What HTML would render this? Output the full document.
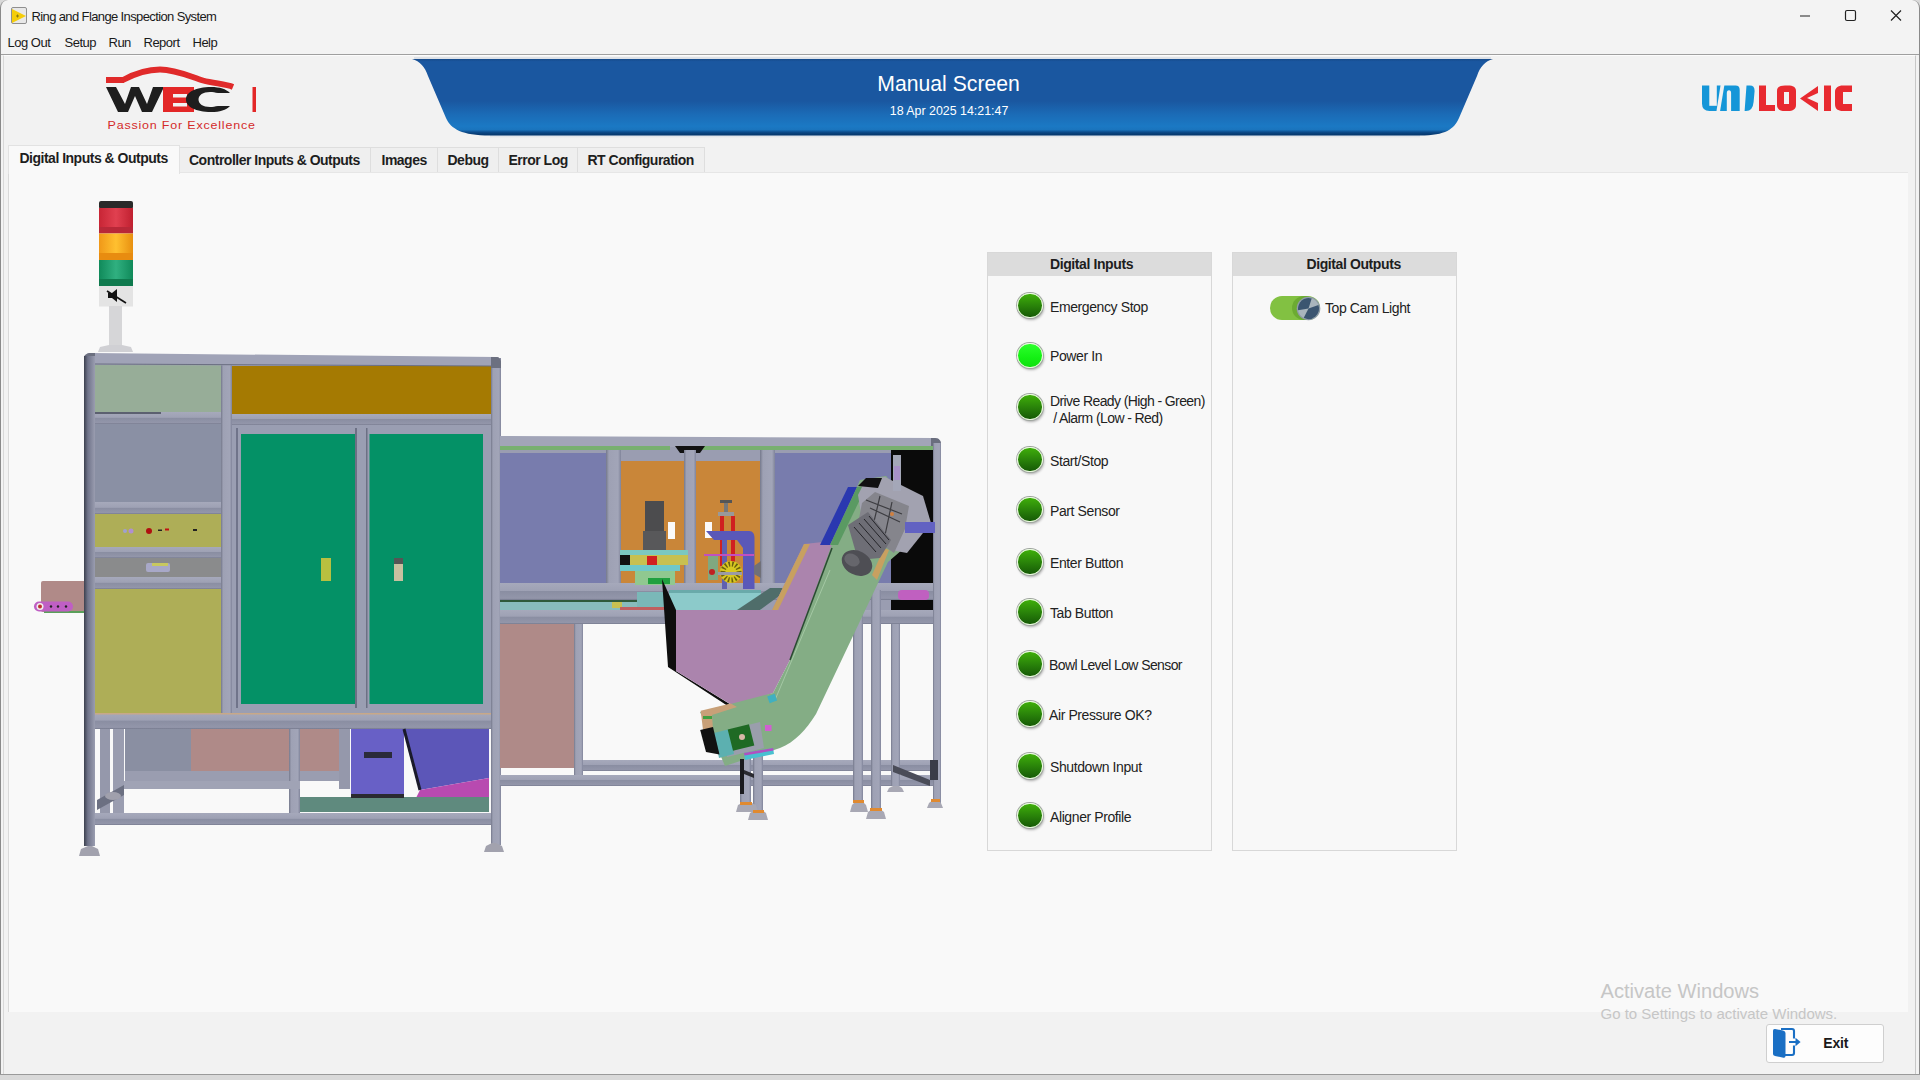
<!DOCTYPE html>
<html><head><meta charset="utf-8">
<style>
*{box-sizing:border-box;margin:0;padding:0}
html,body{width:1920px;height:1080px;overflow:hidden;background:#d9d9d9;font-family:"Liberation Sans",sans-serif;}
.abs{position:absolute}
#win{position:absolute;left:0;top:0;width:1920px;height:1075px;background:#f3f3f3;border:1px solid #8a8a8a;border-top:none;border-radius:8px 8px 0 0;overflow:hidden}
.t{position:absolute;white-space:nowrap;line-height:1}
.menu{font-size:13px;letter-spacing:-0.5px;color:#1a1a1a;top:35.8px}
#inner{position:absolute;left:2px;top:55px;width:1913px;height:1019px;background:#f2f2f2;border-left:1px solid #d8d8d8;border-top:1px solid #fcfcfc;border-right:1px solid #c8c8c8}
.tab{position:absolute;top:147px;height:26px;border:1px solid #dedede;border-bottom:none;background:#efefef}
.tt{position:absolute;white-space:nowrap;line-height:1;font-size:14px;font-weight:bold;letter-spacing:-0.5px;color:#1e1e1e;top:152.5px}
#content{position:absolute;left:8px;top:172px;width:1900px;height:840px;background:#f9f9f9;border-left:1px solid #d9d9d9;border-top:1px solid #e6e6e6}
.panel{position:absolute;top:252px;width:225px;height:599px;border:1px solid #d8d8d8;background:#f8f8f8}
.phead{position:absolute;left:0;top:0;width:100%;height:23px;background:#dcdcdc}
.ph{position:absolute;white-space:nowrap;line-height:1;font-size:14px;font-weight:bold;letter-spacing:-0.4px;color:#1e1e1e;top:256.6px}
.led{position:absolute;left:1017px;width:25.5px;height:25.5px;border-radius:50%;background:linear-gradient(#3fae0a,#2a840a 50%,#165a06);border:1.4px solid #e6fcd8;box-shadow:0 0 0 0.9px #a0a6a0,1px 2px 2.5px rgba(0,0,0,0.3)}
.led.on{background:linear-gradient(#2cff2c,#14f014 60%,#10e010)}
.lbl{position:absolute;left:1050px;font-size:14px;letter-spacing:-0.4px;color:#222;white-space:nowrap;line-height:16.5px}
</style></head><body>
<div id="win">
  <!-- title bar -->
  <div class="abs" style="left:10px;top:7px;width:16px;height:17px;border:1px solid #8f8f8f;border-radius:2px;background:#e8e8e8"></div>
  <svg class="abs" style="left:11px;top:8px" width="15" height="15"><polygon points="0,1 0,15 14,8" fill="#f5cd0a"/><path d="M4,8h3M5.5,6.5v3" stroke="#8a7a10" stroke-width="1"/></svg>
  <div class="t" style="left:30.5px;top:9.6px;font-size:13px;letter-spacing:-0.62px;color:#1a1a1a">Ring and Flange Inspection System</div>
  <svg class="abs" style="left:1794px;top:8px" width="110" height="16">
    <line x1="5" y1="8" x2="15" y2="8" stroke="#222" stroke-width="1.2"/>
    <rect x="50.5" y="2.5" width="10" height="10" rx="1.5" fill="none" stroke="#222" stroke-width="1.2"/>
    <path d="M96,2.5 L106,12.5 M106,2.5 L96,12.5" stroke="#222" stroke-width="1.2"/>
  </svg>
  <!-- menu -->
  <div class="t menu" style="left:6.5px">Log Out</div>
  <div class="t menu" style="left:63.5px">Setup</div>
  <div class="t menu" style="left:107.5px">Run</div>
  <div class="t menu" style="left:142.5px">Report</div>
  <div class="t menu" style="left:191.5px">Help</div>
  <div class="abs" style="left:0;top:54px;width:1920px;height:1px;background:#9f9f9f"></div>
  <div id="inner"></div>
</div>
<div class="abs" style="left:0;top:1074px;width:1920px;height:1px;background:#9a9a9a"></div>

<!-- WEC logo -->
<svg class="abs" style="left:100px;top:60px" width="170" height="75" viewBox="100 60 170 75">
  <path d="M106,80 L123,80 C135,73.5 146,69.5 160,69.5 C175,69.5 189,76 203,80.5 C214,83.5 226,84 233,87" fill="none" stroke="#e02a2a" stroke-width="5.8"/>
  <polygon points="106,87 116,87 125,104 131,87 139,87 147,104 153,87 164,87 152,112 142,112 135,96 128,112 118,112" fill="#1e1e1e"/>
  <rect x="163" y="87" width="31" height="25" fill="#e32727"/>
  <rect x="173" y="94" width="14" height="3.5" fill="#f2f2f2"/>
  <rect x="173" y="103" width="14" height="3.5" fill="#f2f2f2"/>
  <path d="M230,93 C226,89 220,87 211,87 C196,87 186,92 186,99.5 C186,107 196,112 211,112 C220,112 226,110 230,106 L218,106 C215,106.5 213,107 210,107 C203,107 198.5,104 198.5,99.5 C198.5,95 203,92 210,92 C213,92 215,92.5 218,93 Z" fill="#1e1e1e"/>
  <rect x="252.5" y="87" width="3.5" height="25" fill="#e32727"/>
</svg>
<div class="t" style="left:107.5px;top:118.5px;font-size:12.5px;color:#d42a2a;letter-spacing:0.8px;transform:scaleY(0.86);transform-origin:0 100%">Passion For Excellence</div>
<!-- banner -->
<svg class="abs" style="left:400px;top:55px" width="1110" height="90" viewBox="400 55 1110 90">
  <defs>
    <linearGradient id="bg1" x1="0" y1="0" x2="0" y2="1">
      <stop offset="0" stop-color="#164a8a"/>
      <stop offset="0.035" stop-color="#1a57a0"/>
      <stop offset="0.55" stop-color="#1a57a0"/>
      <stop offset="0.72" stop-color="#1b6bb6"/>
      <stop offset="0.88" stop-color="#1b79c4"/>
      <stop offset="0.925" stop-color="#1a74bd"/>
      <stop offset="0.955" stop-color="#0d4c8c"/>
      <stop offset="0.985" stop-color="#073a70"/>
      <stop offset="1" stop-color="#0c4078"/>
    </linearGradient>
    <linearGradient id="sh" x1="0" y1="0" x2="0" y2="1">
      <stop offset="0" stop-color="#8aa0c0" stop-opacity="0.6"/>
      <stop offset="1" stop-color="#f2f2f2" stop-opacity="0"/>
    </linearGradient>
  </defs>
  <rect x="490" y="134" width="930" height="5" fill="url(#sh)"/><rect x="414" y="57" width="1077" height="2.5" fill="#c8d0dc" opacity="0.5"/>
  <path d="M412,59 L1493,59 C1485,61 1480,67 1477,76 L1459,118 C1454,129 1446,135.5 1420,135.5 L490,135.5 C462,135.5 451,129 446,118 L428,76 C425,67 420,61 412,59 Z" fill="url(#bg1)"/>
</svg>
<div class="t" style="left:877.3px;top:73.3px;font-size:21.2px;color:#fff">Manual Screen</div>
<div class="t" style="left:889.8px;top:105px;font-size:12.4px;color:#fff">18 Apr 2025 14:21:47</div>
<!-- unilogic -->
<svg class="abs" style="left:1700px;top:83px" width="156" height="30" viewBox="1700 83 156 30">
  <path d="M1702,85.6 H1735.5 Q1739.7,85.6 1739.7,90 V111 H1709.5 Q1702,111 1702,103.5 Z" fill="#1596d8"/>
  <rect x="1709.3" y="85" width="7.5" height="20.8" fill="#f2f2f2"/>
  <path d="M1720.6,85 L1724.4,85 L1720,111.5 L1716.4,111.5 Z" fill="#f2f2f2"/>
  <path d="M1726.8,111.5 V93 Q1726.8,90.3 1729,90.3 Q1731.1,90.3 1731.1,93 V111.5 Z" fill="#f2f2f2"/>
  <path d="M1746.5,85.6 H1750 Q1754.6,85.6 1754.6,91 L1753.6,102 Q1752.8,111 1746,111 H1744.6 Z" fill="#1596d8"/>
  <path d="M1759,85.5 L1766,85.5 L1766,105 L1775,105 L1775,111 L1759,111 Z" fill="#e82a30"/>
  <path d="M1777,91 C1777,87 1780,85.5 1785,85.5 L1788,85.5 C1793,85.5 1796,87 1796,91 L1796,105 C1796,109 1793,111 1788,111 L1785,111 C1780,111 1777,109 1777,105 Z M1784,92 L1784,104 L1789,104 L1789,92 Z" fill="#e82a30" fill-rule="evenodd"/>
  <path d="M1818,86 L1818,93 L1807,98 L1818,103 L1818,111 L1800,98.5 Z" fill="#e82a30"/>
  <rect x="1824" y="85.5" width="7" height="25.5" fill="#e82a30"/>
  <path d="M1852,85.5 L1852,92 L1843,92 L1843,104 L1852,104 L1852,111 L1843,111 C1838,111 1835,109 1835,104 L1835,92 C1835,88 1838,85.5 1843,85.5 Z" fill="#e82a30"/>
</svg>
<!-- tabs -->
<div class="tab" style="left:178px;width:193px"></div>
<div class="tab" style="left:370px;width:68px"></div>
<div class="tab" style="left:437px;width:62px"></div>
<div class="tab" style="left:498px;width:80px"></div>
<div class="tab" style="left:577px;width:128px"></div>
<div id="content"></div>
<div class="tab" style="left:8px;top:145px;width:172px;height:29px;background:#f9f9f9;border-color:#e2e2e2"></div>
<div class="tt" style="left:19.5px;top:150.6px">Digital Inputs &amp; Outputs</div>
<div class="tt" style="left:189px">Controller Inputs &amp; Outputs</div>
<div class="tt" style="left:381.5px">Images</div>
<div class="tt" style="left:447.5px">Debug</div>
<div class="tt" style="left:508.5px">Error Log</div>
<div class="tt" style="left:587.5px">RT Configuration</div>


<svg class="abs" style="left:0;top:0" width="1920" height="1080" viewBox="0 0 1920 1080">
<defs>
  <linearGradient id="postL" x1="0" x2="1" y1="0" y2="0"><stop offset="0" stop-color="#3c404e"/><stop offset="0.35" stop-color="#70748a"/><stop offset="1" stop-color="#9a9db0"/></linearGradient>
  <linearGradient id="postG" x1="0" x2="1" y1="0" y2="0"><stop offset="0" stop-color="#75798c"/><stop offset="0.2" stop-color="#9ea1b4"/><stop offset="0.8" stop-color="#a2a5b8"/><stop offset="1" stop-color="#80849a"/></linearGradient>
  <linearGradient id="railG" x1="0" x2="0" y1="0" y2="1"><stop offset="0" stop-color="#a6a9bb"/><stop offset="0.45" stop-color="#9ea1b4"/><stop offset="0.5" stop-color="#8a8ea2"/><stop offset="0.9" stop-color="#9396aa"/><stop offset="1" stop-color="#74788c"/></linearGradient>
  <linearGradient id="tRed" x1="0" x2="1"><stop offset="0" stop-color="#c82535"/><stop offset="0.5" stop-color="#e04050"/><stop offset="1" stop-color="#c02030"/></linearGradient>
  <linearGradient id="tOr" x1="0" x2="1"><stop offset="0" stop-color="#f09818"/><stop offset="0.5" stop-color="#ffc030"/><stop offset="1" stop-color="#e89010"/></linearGradient>
  <linearGradient id="tGr" x1="0" x2="1"><stop offset="0" stop-color="#108a5a"/><stop offset="0.5" stop-color="#30b080"/><stop offset="1" stop-color="#108a5a"/></linearGradient>
</defs>
<!-- light tower -->
<rect x="99" y="201" width="34" height="8" rx="2" fill="#2a2a2a"/>
<rect x="99" y="208" width="34" height="19" fill="url(#tRed)"/>
<rect x="99" y="227" width="34" height="6.5" fill="#b82838"/>
<rect x="99" y="233.5" width="34" height="20" fill="url(#tOr)"/>
<rect x="99" y="253" width="34" height="7" fill="#e88c10"/>
<rect x="99" y="260" width="34" height="19" fill="url(#tGr)"/>
<rect x="99" y="279" width="34" height="7" fill="#0f7a4e"/>
<rect x="99" y="286" width="34" height="20.5" fill="#e4e4e4"/>
<path d="M108,293 L112,293 L117,289 L117,302 L112,298 L108,298 Z" fill="#111"/>
<path d="M107,291 L126,303" stroke="#111" stroke-width="1.6"/>
<rect x="109" y="306" width="13" height="40" fill="#d6d6d8"/>
<path d="M98,352 L100,347 L109,345 L122,345 L131,347 L133,352 Z" fill="#d0d0d4"/>
<!-- left pink stub -->
<rect x="41" y="581" width="45" height="31" rx="2" fill="#b08a88"/>
<rect x="44" y="611" width="42" height="2" fill="#5aa05a"/>
<rect x="34" y="601.5" width="39" height="10" rx="5" fill="#bf5fc4"/>
<circle cx="40" cy="606.5" r="3.5" fill="#f0f0f0"/><circle cx="40" cy="606.5" r="2" fill="#c03030"/>
<circle cx="51" cy="606.5" r="1.2" fill="#222"/><circle cx="58" cy="606.5" r="1.2" fill="#222"/><circle cx="66" cy="606.5" r="1.2" fill="#222"/>
<!-- main cabinet -->
<rect x="95" y="364" width="396" height="365" fill="#9a9db1"/>
<rect x="95" y="364" width="126" height="48" fill="#97ad98"/>
<rect x="95" y="412" width="126" height="12" fill="url(#railG)"/>
<rect x="95" y="412" width="66" height="2" fill="#5c6070"/>
<rect x="95" y="424" width="126" height="78" fill="#8a90a4"/>
<rect x="95" y="502" width="126" height="12" fill="url(#railG)"/>
<rect x="95" y="514" width="126" height="33" fill="#aeae57"/>
<circle cx="125" cy="531" r="2" fill="#a0a0d0"/><circle cx="131" cy="531" r="2.5" fill="#b090d0"/><circle cx="149" cy="531" r="3" fill="#b01010"/>
<rect x="158" y="529.5" width="4" height="1.5" fill="#222"/><rect x="165" y="528.5" width="4" height="2" fill="#c01010"/><rect x="193" y="529" width="4" height="2" fill="#222"/>
<rect x="95" y="547" width="126" height="11" fill="url(#railG)"/>
<rect x="95" y="558" width="126" height="19" fill="#8a8b8c"/>
<rect x="146" y="563" width="24" height="9" rx="2" fill="#a8a8c8"/><rect x="152" y="563" width="16" height="3" fill="#c8c860"/>
<rect x="95" y="577" width="126" height="12" fill="url(#railG)"/>
<rect x="95" y="589" width="126" height="124" fill="#aeae57"/>
<rect x="221" y="364" width="11" height="350" fill="url(#postG)"/>
<rect x="232" y="366" width="259" height="48" fill="#a57a02"/>
<rect x="232" y="414" width="259" height="11" fill="url(#railG)"/>
<rect x="232" y="425" width="259" height="289" fill="#9a9eb2"/>
<rect x="236" y="428" width="2" height="280" fill="#70748a"/>
<rect x="241" y="434" width="114" height="270" fill="#049166"/>
<rect x="369.5" y="434" width="113.5" height="270" fill="#049166"/>
<rect x="355" y="428" width="2" height="280" fill="#6c7084"/><rect x="366" y="428" width="1.5" height="280" fill="#6c7084"/>
<rect x="321" y="558" width="10" height="23" fill="#b8c040"/>
<rect x="394" y="558" width="9" height="6" fill="#555"/><rect x="394" y="564" width="9" height="17" fill="#c8c0a0"/>
<rect x="491" y="358" width="10" height="487" fill="url(#postG)"/>
<!-- top rail -->
<path d="M84,358 C84,355 87,353 91,353 L496,357 C499,357 501,359 501,362 L501,366 L84,365 Z" fill="#a0a3b7"/>
<path d="M95,364 L491,366" stroke="#6a6e80" stroke-width="1"/>
<path d="M491,357 L496,357 C499,357 501,359 501,362 L501,368 L491,368 Z" fill="#6c7080"/><path d="M84,366 L84,358 C84,355 87,353 91,353 L95,353 L95,366 Z" fill="#6c7080"/>
<!-- table rail -->
<rect x="95" y="713" width="396" height="16" fill="url(#railG)"/>
<rect x="95" y="713" width="396" height="1.5" fill="#c8a888"/>
<!-- under table -->
<rect x="125" y="729" width="66" height="51" fill="#8a8fa2"/>
<rect x="191" y="729" width="98" height="42" fill="#af8a88"/>
<rect x="300" y="729" width="39" height="42" fill="#af8a88"/>
<rect x="125" y="771" width="225" height="10" fill="#9a9db0"/>
<rect x="100" y="729" width="10" height="85" fill="#9598ab"/>
<rect x="113" y="729" width="11" height="85" fill="#9a9db0"/>
<rect x="289" y="729" width="11" height="86" fill="url(#postG)"/>
<rect x="339" y="729" width="11" height="60" fill="#9598ab"/>
<path d="M97,800 L124,785 L124,795 L97,810 Z" fill="#6c7082"/>
<rect x="124" y="781" width="176" height="8" fill="#a0a3b5"/>
<ellipse cx="113" cy="796" rx="8" ry="4" fill="#a0a0ac"/>
<rect x="351" y="729" width="53" height="65" fill="#6860c6"/>
<rect x="364" y="752" width="28" height="6" fill="#2a2a3a"/>
<path d="M404,729 L489,729 L489,778 L420,790 Z" fill="#5c56b8"/>
<path d="M404,729 L420,790" stroke="#1a1a2a" stroke-width="3"/>
<path d="M420,790 L489,778 L489,798 L416,798 Z" fill="#b84ab0"/>
<rect x="300" y="797" width="189" height="15" fill="#5f8a7e"/>
<rect x="351" y="794" width="53" height="4" fill="#2a2a30"/>
<rect x="95" y="813" width="396" height="12" fill="url(#railG)"/>
<!-- left post & feet -->
<rect x="84" y="356" width="11" height="490" fill="url(#postL)"/>
<path d="M79,856 L81,849 L88,846 L92,846 L98,849 L100,856 Z" fill="#a2a2ae"/>
<path d="M484,852 L486,846 L492,843 L496,843 L502,846 L504,852 Z" fill="#a2a2ae"/>
<!-- middle section -->
<rect x="500" y="447" width="434" height="177" fill="#9a9db1"/>
<path d="M500,436 L935,438 C939,438 941,441 941,444 L941,447 L500,447 Z" fill="#a2a5b8"/><path d="M931,438 L935,438 C939,438 941,441 941,444 L941,448 L931,448 Z" fill="#6a6e7e"/>
<rect x="500" y="446" width="170" height="4" fill="#78b070"/><rect x="700" y="446" width="235" height="4" fill="#78b070"/>
<path d="M675,446 L705,446 L700,453 L680,453 Z" fill="#111"/>
<rect x="500" y="453" width="106" height="130" fill="#787cad"/>
<rect x="606" y="450" width="15" height="150" fill="url(#postG)"/>
<rect x="621" y="461" width="63" height="124" fill="#c98639"/>
<rect x="684" y="450" width="12" height="150" fill="url(#postG)"/>
<rect x="696" y="461" width="64" height="128" fill="#c98639"/>
<rect x="760" y="450" width="15" height="150" fill="url(#postG)"/>
<rect x="775" y="453" width="116" height="130" fill="#787cad"/>
<rect x="891" y="450" width="43" height="160" fill="#0a0a0a"/>

<rect x="500" y="583" width="441" height="17" fill="url(#railG)"/>
<rect x="500" y="600" width="170" height="2" fill="#2e5a3a"/>
<rect x="500" y="602" width="170" height="8" fill="#88bcbc"/>
<rect x="500" y="610" width="441" height="14" fill="url(#railG)"/>
<rect x="500" y="624" width="74" height="144" fill="#af8a88"/>
<rect x="574" y="624" width="9" height="152" fill="url(#postG)"/>
<rect x="583" y="760" width="350" height="11" fill="url(#railG)"/>
<rect x="500" y="775" width="433" height="11" fill="url(#railG)"/>
<rect x="933" y="443" width="8" height="360" fill="url(#postG)"/>
<rect x="891" y="624" width="9" height="162" fill="url(#postG)"/>
<!-- orange panel 1 mechanism -->
<rect x="645" y="501" width="19" height="30" fill="#4c4c4e"/>
<rect x="643" y="531" width="23" height="20" fill="#58585a"/>
<rect x="668" y="522" width="7" height="17" fill="#fafafa"/>
<rect x="620" y="550" width="68" height="8" fill="#7cc8c0"/>
<rect x="620" y="555" width="68" height="10" fill="#c8c050"/>
<rect x="620" y="555" width="10" height="10" fill="#111"/>
<rect x="647" y="556" width="10" height="9" fill="#d02020"/>
<rect x="620" y="565" width="60" height="6" fill="#70c8c8"/>
<rect x="635" y="571" width="40" height="14" fill="#90c890"/>
<rect x="648" y="578" width="22" height="6" fill="#20a040"/>
<!-- orange panel 2 mechanism -->
<rect x="720" y="500" width="12" height="3" fill="#555"/>
<rect x="724" y="503" width="4" height="10" fill="#777"/>
<rect x="718" y="512" width="16" height="4" fill="#999"/>
<rect x="720" y="516" width="4" height="50" fill="#d02020"/><rect x="731" y="516" width="4" height="50" fill="#d02020"/>
<rect x="705" y="522" width="7" height="16" fill="#fafafa"/>
<path d="M706,531 L749,531 C753,531 754.5,534 754.5,538 L754.5,589 L743,589 L743,548 L737,540 L714,540 Z" fill="#5a58b8"/><path d="M754,566 L761,561 L761,578 L754,574 Z" fill="#707078"/>
<rect x="722" y="540" width="5" height="49" fill="#6060b0"/>
<rect x="708" y="555" width="10" height="25" fill="#80a880"/>
<circle cx="712" cy="572" r="3" fill="#c02020"/>
<circle cx="731" cy="572" r="11" fill="#d8c820"/>
<circle cx="731" cy="572" r="8" fill="none" stroke="#6a6010" stroke-width="5" stroke-dasharray="1.5 2"/>
<rect x="718" y="572" width="24" height="3" fill="#9a9aa6"/>
<rect x="704" y="554" width="50" height="2" fill="#c050c0"/>
<!-- teal trough -->
<rect x="669" y="590" width="92" height="20" fill="#8ccaca"/>
<rect x="669" y="590" width="92" height="3" fill="#6aaaaa"/>
<rect x="637" y="592" width="30" height="18" fill="#7ab8b8"/>
<rect x="612" y="602" width="10" height="6" fill="#c8c050"/>
<rect x="620" y="607" width="50" height="3" fill="#c06060"/>
<path d="M737,610 L770,588 L790,588 L760,610 Z" fill="#4f6d6a"/>
<!-- right lower legs -->
<rect x="853" y="615" width="10" height="187" fill="url(#postG)"/>
<rect x="871" y="590" width="10" height="220" fill="url(#postG)"/>
<rect x="740" y="740" width="11" height="63" fill="url(#postG)"/>
<rect x="753" y="745" width="10" height="66" fill="url(#postG)"/>

<rect x="930" y="760" width="8" height="20" fill="#3a3c48"/>
<path d="M893,765 L930,780 L930,786 L893,772 Z" fill="#4a4c58"/>
<g fill="#a8a8b4">
<path d="M736,812 L738,805 L744,802 L750,802 L756,805 L758,812 Z"/>
<path d="M748,820 L750,813 L755,810 L762,810 L766,813 L768,820 Z"/>
<path d="M850,812 L852,805 L856,801 L862,801 L866,805 L868,812 Z"/>
<path d="M866,819 L868,812 L872,809 L880,809 L884,812 L886,819 Z"/>
<path d="M887,792 L889,788 L893,786 L899,786 L902,788 L904,792 Z"/>
<path d="M927,808 L929,803 L933,800 L938,800 L941,803 L943,808 Z"/>
</g>
<g fill="#e08a30">
<rect x="740" y="802" width="12" height="3"/><rect x="753" y="810" width="11" height="3"/><rect x="853" y="800" width="11" height="3"/><rect x="870" y="808" width="12" height="3"/><rect x="931" y="799" width="9" height="3"/>
</g>
<!-- hopper -->
<path d="M662,579 L676,610 L676,671 L733,706 L737,712 L668,667 Z" fill="#0e0e0e"/>
<path d="M676,610 L772,610 L804,544 L842,540 L825,590 L790,660 L773,693 L735,707 L676,671 Z" fill="#ab84ad"/>
<path d="M772,610 L804,544 L810,544 L778,610 Z" fill="#c8a060"/>
<!-- conveyor -->
<path d="M700,712 L773,693 L790,660 L832,544 L860,480 L886,476 L931,525 L888,562 L816,714 C806,730 795,742 780,748 L725,766 L716,745 Z" fill="#84ad85"/>
<path d="M790,660 L832,548" stroke="#2a4a32" stroke-width="1.5"/>
<path d="M775,700 L830,570" stroke="#a4c8a4" stroke-width="1"/>
<path d="M872,575 L884,548 L889,550 L877,580 Z" fill="#c8a060"/>
<path d="M820,545 L848,487 L857,487 L830,545 Z" fill="#2a38b0"/>
<path d="M830,545 L857,487 L866,487 L838,545 Z" fill="#5a9a62"/>
<path d="M866,479 L885,477 L923,496 L931,523 L907,553 L896,551 L880,540 L862,520 L858,495 Z" fill="#a2a2b0"/>
<path d="M858,486 L866,478 L882,478 L878,488 Z" fill="#111"/>
<path d="M875,492 L909,506 L905,529 L894,553 L881,544 L857,529 L862,503 Z" fill="#85858c"/>
<g stroke="#2a2a2e" stroke-width="1.2" fill="none" opacity="0.8"><path d="M866,500 L902,514 M870,508 L900,522 M880,496 L872,530 M892,502 L884,540"/></g>
<circle cx="892" cy="514" r="2" fill="#d08040"/>
<path d="M848,525 L868,512 L891,540 L880,558 L858,560 Z" fill="#6e6e76"/>
<g stroke="#1e1e22" stroke-width="1" opacity="0.9"><path d="M854,527 L876,552 M859,523 L881,548 M864,519 L886,544 M869,516 L889,540"/></g>
<ellipse cx="857" cy="563" rx="16" ry="12" transform="rotate(28 857 563)" fill="#4e4e54"/>
<ellipse cx="852" cy="560" rx="8" ry="6" transform="rotate(28 852 560)" fill="#66666c"/>
<rect x="905" y="522" width="30" height="11" fill="#6262c2"/>
<rect x="893" y="455" width="8" height="36" fill="#a4a7b8"/><rect x="894" y="466" width="6" height="14" fill="#a890c8"/>
<rect x="898" y="590" width="31" height="10" rx="4" fill="#c060c0"/>
<path d="M700.7,710.7 L730.7,703.6 L737,707 L712,715 L713,730 L703,730 Z" fill="#c8a078"/>
<rect x="703" y="716" width="9" height="3" fill="#40a040"/>
<path d="M723.6,731 L760,722 L764,748 L727,757 Z" fill="#9a9eac"/>
<path d="M714,733 L730,729 L734,754 L719,758 Z" fill="#5cb0b0"/>
<path d="M700.2,730 L713,727 L719.5,754.5 L706,752 Z" fill="#111"/>
<rect x="730" y="726.5" width="22" height="22" fill="#1f6a24" transform="rotate(-14 741 737.5)"/>
<circle cx="742" cy="737" r="3" fill="#d8b8a8"/>
<rect x="765" y="725" width="6.5" height="6" fill="#d060d0"/>
<rect x="768" y="695" width="8" height="7" fill="#40b0c0" transform="rotate(-20 772 698)"/>
<path d="M744,753 L773,748 L774,754 L745,760 Z" fill="#48c0d0"/>
<path d="M744,753 L773,748 L773.5,750.5 L744.5,755.5 Z" fill="#b050c0"/>
<rect x="740" y="759" width="4" height="35" fill="#1a1a1e"/>
<path d="M744,770 L754,774 L754,778 L744,774 Z" fill="#2a2a30"/>
</svg>

<!-- panels -->
<div class="panel" style="left:987px"><div class="phead"></div></div>
<div class="panel" style="left:1232px"><div class="phead"></div></div>
<div class="ph" style="left:1050px">Digital Inputs</div>
<div class="ph" style="left:1306.5px">Digital Outputs</div>
<div class="led" style="top:292.85px"></div>
<div class="lbl" style="top:298.6px">Emergency Stop</div>
<div class="led on" style="top:342.65px"></div>
<div class="lbl" style="top:348.4px">Power In</div>
<div class="led" style="top:394.45px"></div>
<div class="led" style="top:446.75px"></div>
<div class="lbl" style="top:452.5px">Start/Stop</div>
<div class="led" style="top:496.85px"></div>
<div class="lbl" style="top:502.6px">Part Sensor</div>
<div class="led" style="top:549.25px"></div>
<div class="lbl" style="top:555.0px">Enter Button</div>
<div class="led" style="top:599.05px"></div>
<div class="lbl" style="top:604.8px">Tab Button</div>
<div class="led" style="top:651.25px"></div>
<div class="lbl" style="left:1049px;top:657.0px;letter-spacing:-0.6px">Bowl Level Low Sensor</div>
<div class="led" style="top:701.25px"></div>
<div class="lbl" style="left:1049px;top:707.0px">Air Pressure OK?</div>
<div class="led" style="top:753.25px"></div>
<div class="lbl" style="top:759.0px">Shutdown Input</div>
<div class="led" style="top:802.95px"></div>
<div class="lbl" style="top:808.7px">Aligner Profile</div>
<div class="lbl" style="top:393px;letter-spacing:-0.6px">Drive Ready (High - Green)<br>&nbsp;/ Alarm (Low - Red)</div>

<!-- toggle -->
<div class="abs" style="left:1270px;top:296.3px;width:50px;height:23.8px;border-radius:12px;background:#82c142"></div>
<div class="abs" style="left:1291.5px;top:296.3px;width:25px;height:23.8px;border-radius:12px;background:#6cab32"></div>
<svg class="abs" style="left:1294.8px;top:294.8px" width="27" height="27" viewBox="0 0 27 27">
  <circle cx="13.5" cy="13.5" r="11.8" fill="#8f9ca6"/>
  <circle cx="13.5" cy="13.5" r="10.6" fill="#a9b5bd"/>
  <path d="M13.5,13.5 L3.13,15.14 A10.5,10.5 0 0 1 16.68,3.49 Z" fill="#3b5570"/>
  <path d="M13.5,13.5 L23.44,10.12 A10.5,10.5 0 0 1 8.77,22.87 Z" fill="#3b5570"/>
</svg>
<div class="lbl" style="left:1325px;top:300px">Top Cam Light</div>
<!-- activate windows -->
<div class="t" style="left:1600.5px;top:980.5px;font-size:20.1px;color:#c6c6c6">Activate Windows</div>
<div class="t" style="left:1600.5px;top:1005.5px;font-size:15px;color:#c6c6c6">Go to Settings to activate Windows.</div>
<!-- exit button -->
<div class="abs" style="left:1766px;top:1024px;width:118px;height:39px;background:#fdfdfd;border:1px solid #cfcfcf;border-radius:3px"></div>
<svg class="abs" style="left:1772px;top:1027px" width="30" height="33" viewBox="1772 1027 30 33">
  <path d="M1781,1029 L1792,1029 Q1794,1029 1794,1031 L1794,1038.5 M1794,1045.5 L1794,1053 Q1794,1055 1792,1055 L1785,1055" fill="none" stroke="#1a6fc4" stroke-width="2.1"/>
  <path d="M1773,1030.5 Q1773,1028.8 1775,1029 L1783,1030.5 Q1785.5,1031 1785.5,1033 L1785.5,1056 Q1785.5,1058 1783.5,1057.7 L1775,1056 Q1773,1055.6 1773,1054 Z" fill="#1a6fc4"/>
  <path d="M1789,1042 L1797,1042" stroke="#1a6fc4" stroke-width="2"/>
  <path d="M1795.5,1037.8 L1800.6,1042 L1795.5,1046.2 Z" fill="#1a6fc4"/>
</svg>
<div class="t" style="left:1823.3px;top:1035.8px;font-size:14px;font-weight:bold;letter-spacing:-0.2px;color:#1a1a1a">Exit</div>

</body></html>
